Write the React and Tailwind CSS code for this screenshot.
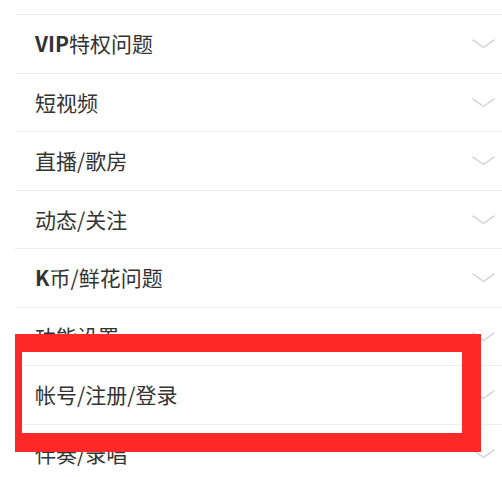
import React from 'react';

const items = [
  { latin: 'VIP', text: '特权问题' },
  { text: '短视频' },
  { text: '直播/歌房' },
  { text: '动态/关注' },
  { latin: 'K', text: '币/鲜花问题' },
  { text: '功能设置' },
  { text: '帐号/注册/登录' },
  { text: '伴奏/录唱' },
];

function Chevron() {
  return (
    <svg width="23" height="11" viewBox="0 0 23 11" fill="none">
      <path d="M1 2 Q11.5 9.5 11.5 9.5 Q11.5 9.5 22 2" stroke="#cfcfcf" strokeWidth="1.4" strokeLinecap="round" />
    </svg>
  );
}

export default function App() {
  return (
    <div
      className="relative w-[502px] h-[477px] overflow-hidden bg-white"
      style={{ fontFamily: '"Noto Sans CJK SC", "Noto Sans", sans-serif' }}
    >
      <div className="pl-[15px]">
        <div className="h-[15px] border-b border-[#eeeeee]" />
        {items.map((item) => (
          <div
            key={item.text}
            className="flex items-center justify-between h-[58.5px] border-b border-[#eeeeee] pl-[20px] pr-[7px]"
          >
            <span className="text-[21px] leading-none text-[#333333]">
              {item.latin && <span className="font-semibold">{item.latin}</span>}
              {item.text}
            </span>
            <Chevron />
          </div>
        ))}
      </div>

      {/* annotation box */}
      <div className="absolute left-[15px] top-[334px] w-[466px] h-[118px] border-l-[7px] border-t-[18px] border-r-[19px] border-b-[19px] border-[#fd2929]" />
    </div>
  );
}
